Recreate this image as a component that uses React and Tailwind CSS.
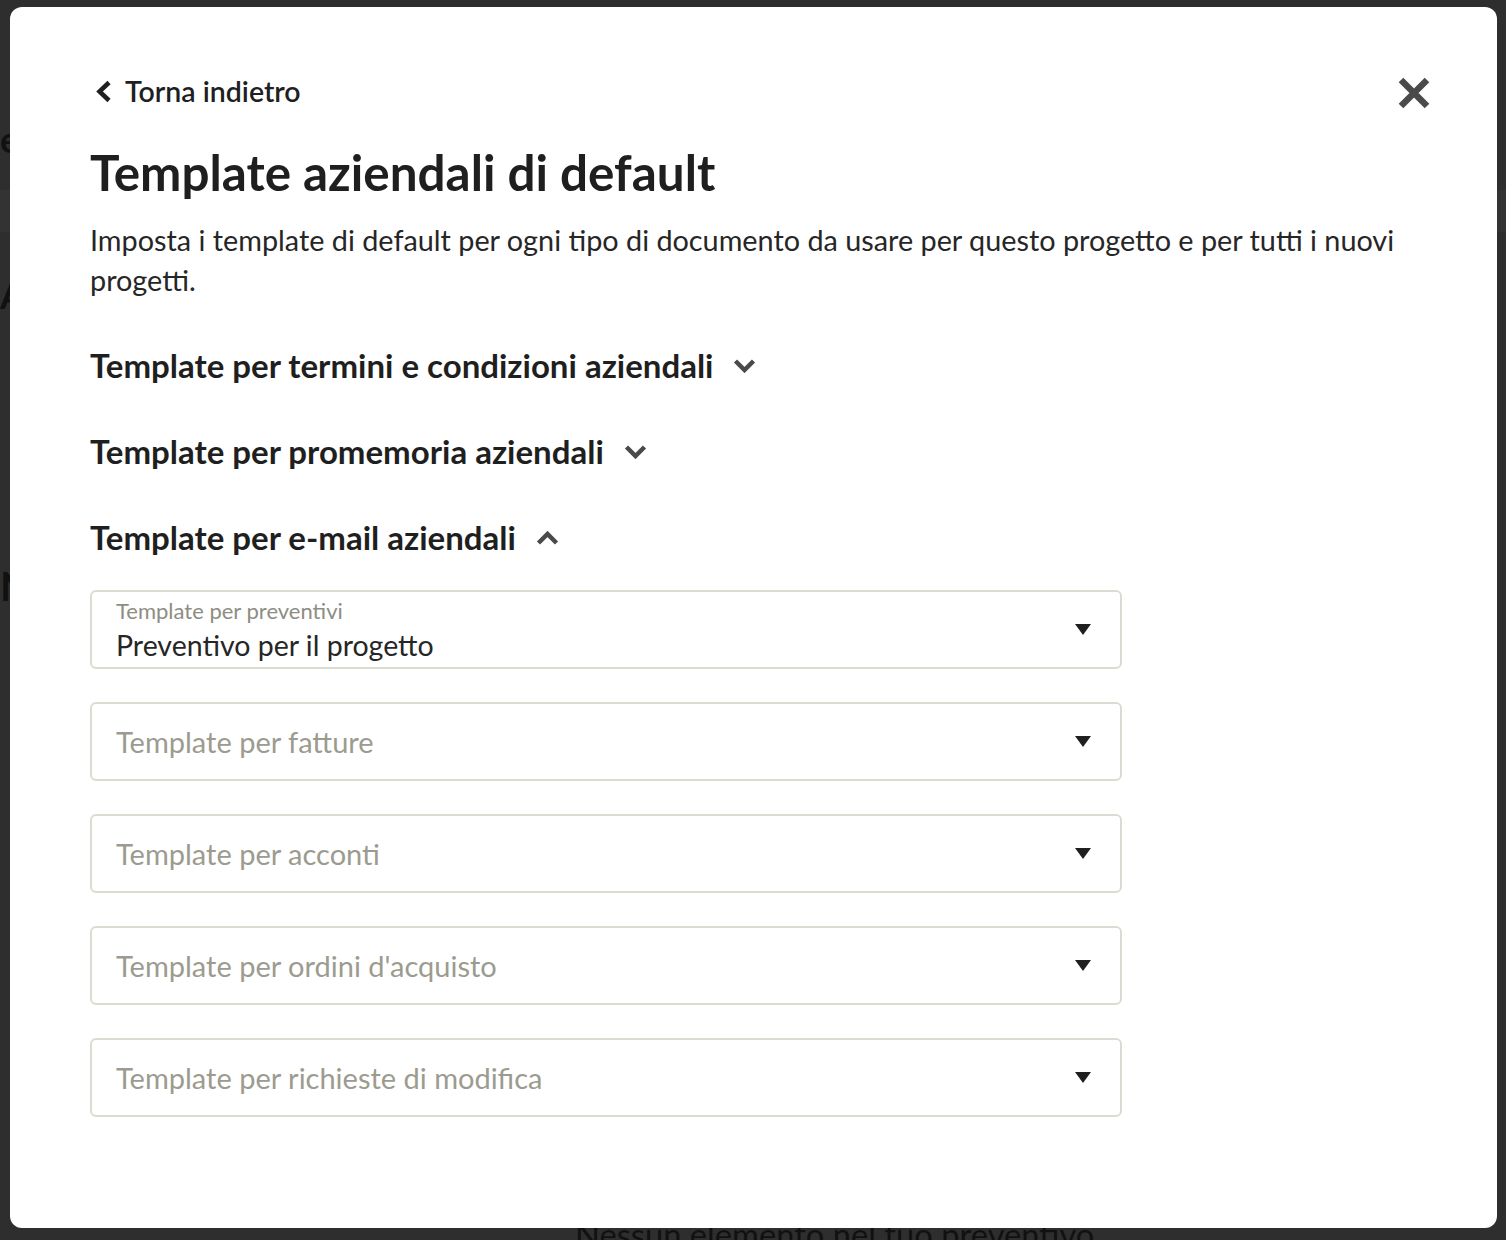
const font = { fontFamily: 'Lato, "Noto Sans", sans-serif' }

function Caret() {
  return (
    <svg width="16" height="11" viewBox="0 0 16 11" className="shrink-0">
      <path d="M0 0 L16 0 L8 11 Z" fill="#1f1f1f" />
    </svg>
  )
}

function Chevron({ up }) {
  return (
    <svg width="23" height="14" viewBox="0 0 23 14" className="shrink-0">
      <polyline
        points={up ? '2.5,12 11.5,3 20.5,12' : '2.5,2 11.5,11 20.5,2'}
        fill="none"
        stroke="#4a4a4a"
        strokeWidth="4.5"
        strokeLinejoin="miter"
      />
    </svg>
  )
}

function SelectField({ label, value, placeholder }) {
  return (
    <div className="h-[79px] w-[1032px] border-2 border-[#dcdbd3] rounded-md flex items-center justify-between pl-6 pr-[29px]">
      {value ? (
        <div className="flex flex-col gap-1">
          <span className="text-[22px] leading-[26px] text-[#8e8d84]">{label}</span>
          <span className="text-[28.5px] leading-[34px] text-[#262626]">{value}</span>
        </div>
      ) : (
        <span className="text-[29px] text-[#9c9b8f]">{placeholder}</span>
      )}
      <Caret />
    </div>
  )
}

function Section({ title, open }) {
  return (
    <div className="flex items-center gap-5 h-[50px]">
      <h2 className="text-[33px] font-bold text-[#1f1f1f]">{title}</h2>
      <Chevron up={open} />
    </div>
  )
}

export default function App() {
  return (
    <div className="relative w-[1506px] h-[1240px] bg-[#2e2e2e] overflow-hidden" style={font}>
      {/* page behind the overlay */}
      <div className="absolute left-0 top-[190px] w-full h-[42px] bg-[#333333]" />
      <div className="absolute left-0 top-[112px] text-[36px] font-bold text-[#111]">e</div>
      <div className="absolute left-0 top-[268px] text-[36px] font-bold text-[#111]">A</div>
      <div className="absolute left-0 top-[556px] text-[40px] font-bold text-[#111]">N</div>
      <div className="absolute left-[575px] top-[1210px] text-[32.7px] text-[#111]">Nessun elemento nel tuo preventivo</div>

      <div className="absolute left-[10px] top-[7px] w-[1487px] h-[1221px] bg-white rounded-xl px-20 pt-[66px]">
        <div className="flex items-center justify-between h-9">
          <button className="flex items-center gap-[13px] text-[28.5px] leading-9 font-semibold text-[#1f1f1f] pl-[5px]">
            <svg width="17" height="23" viewBox="0 0 17 23" className="shrink-0">
              <polyline points="14,2.5 4.5,11.5 14,20.5" fill="none" stroke="#1f1f1f" strokeWidth="4.5" />
            </svg>
            Torna indietro
          </button>
          <svg width="32" height="32" viewBox="0 0 32 32" className="-mr-[13px] mt-1">
            <path d="M3 3 L29 29 M29 3 L3 29" stroke="#4a4a4a" strokeWidth="6.5" />
          </svg>
        </div>

        <h1 className="mt-[33px] text-[49.4px] leading-[60px] font-bold text-[#1f1f1f]">Template aziendali di default</h1>
        <p className="mt-[18px] text-[28.8px] leading-10 text-[#262626]">
          Imposta i template di default per ogni tipo di documento da usare per questo progetto e per tutti i nuovi progetti.
        </p>

        <div className="mt-[41px] flex flex-col gap-9">
          <Section title="Template per termini e condizioni aziendali" />
          <Section title="Template per promemoria aziendali" />
          <Section title="Template per e-mail aziendali" open />
        </div>

        <div className="mt-[27px] flex flex-col gap-[33px]">
          <SelectField label="Template per preventivi" value="Preventivo per il progetto" />
          <SelectField placeholder="Template per fatture" />
          <SelectField placeholder="Template per acconti" />
          <SelectField placeholder="Template per ordini d'acquisto" />
          <SelectField placeholder="Template per richieste di modifica" />
        </div>
      </div>
    </div>
  )
}
